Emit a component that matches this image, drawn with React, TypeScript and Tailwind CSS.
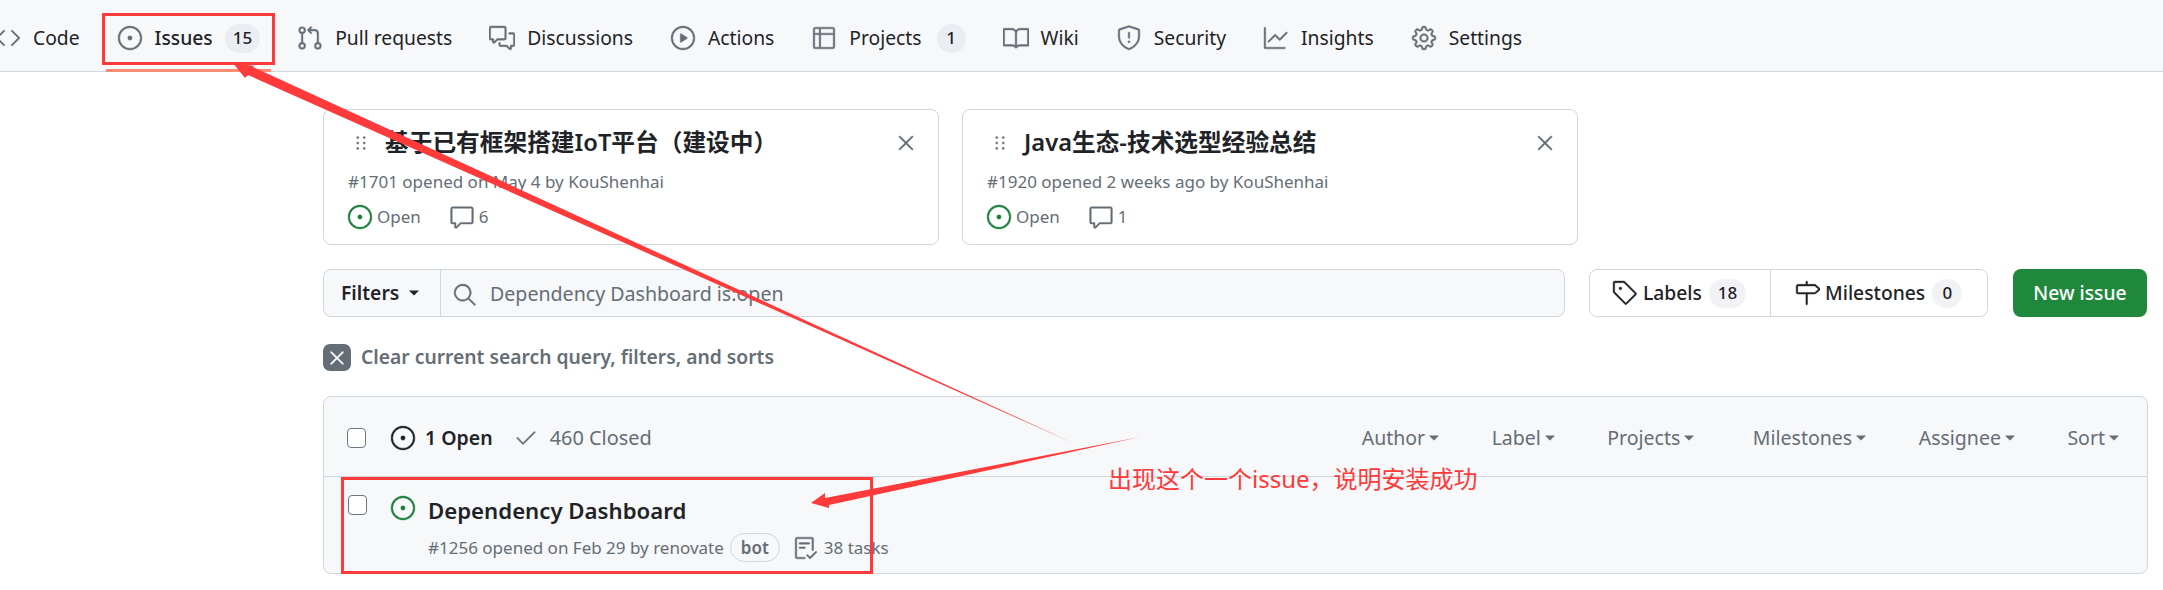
import type { ComponentType, ReactNode } from "react";
import {
  GoBook,
  GoCheck,
  GoChecklist,
  GoCode,
  GoComment,
  GoCommentDiscussion,
  GoGear,
  GoGitPullRequest,
  GoGraph,
  GoGrabber,
  GoIssueOpened,
  GoMilestone,
  GoPlay,
  GoSearch,
  GoShield,
  GoTable,
  GoTag,
  GoTriangleDown,
  GoX,
} from "react-icons/go";

const tabs: { label: string; icon: ComponentType<any>; count?: string; active?: boolean }[] = [
  { label: "Code", icon: GoCode },
  { label: "Issues", icon: GoIssueOpened, count: "15", active: true },
  { label: "Pull requests", icon: GoGitPullRequest },
  { label: "Discussions", icon: GoCommentDiscussion },
  { label: "Actions", icon: GoPlay },
  { label: "Projects", icon: GoTable, count: "1" },
  { label: "Wiki", icon: GoBook },
  { label: "Security", icon: GoShield },
  { label: "Insights", icon: GoGraph },
  { label: "Settings", icon: GoGear },
];

const pinned = [
  { title: "基于已有框架搭建IoT平台（建设中）", meta: "#1701 opened on May 4 by KouShenhai", comments: "6" },
  { title: "Java生态-技术选型经验总结", meta: "#1920 opened 2 weeks ago by KouShenhai", comments: "1" },
];

const listFilters = ["Author", "Label", "Projects", "Milestones", "Assignee", "Sort"];

// octicons come in the 24px variant, so bump the weight to look like the scaled 16px ones
const heavy = { strokeWidth: 0.4 };

function Counter({ children, className }: { children: ReactNode; className: string }) {
  return (
    <span className={`flex items-center justify-center rounded-full text-[17px] font-medium text-[#1f2328] ${className}`}>
      {children}
    </span>
  );
}

function Checkbox() {
  return <span className="block h-[20px] w-[19px] shrink-0 rounded-[4px] border-[1.5px] border-[#6e7781] bg-white" />;
}

function PinnedCard({ title, meta, comments }: { title: string; meta: string; comments: string }) {
  return (
    <div className="h-[136px] w-[616px] rounded-[8px] border border-[#d0d7de] px-[24px] pt-[15px]">
      <div className="flex h-[36px] items-center">
        <GoGrabber className="shrink-0 text-[#656d76]" size={26} {...heavy} />
        <span className="ml-[11px] text-[23.7px] font-semibold text-[#1f2328]">{title}</span>
        <GoX className="ml-auto mr-[-5px] shrink-0 text-[#656d76]" size={26} {...heavy} />
      </div>
      <div className="mt-[9px] text-[17px] leading-[24px] text-[#656d76]">{meta}</div>
      <div className="mt-[10px] flex items-center text-[17px] leading-[24px] text-[#656d76]">
        <GoIssueOpened className="-ml-px text-[#1a7f37]" size={26} {...heavy} />
        <span className="ml-[4px]">Open</span>
        <GoComment className="ml-[28px]" size={26} {...heavy} />
        <span className="ml-[4px]">{comments}</span>
      </div>
    </div>
  );
}

export default function App() {
  return (
    <div className="relative h-[590px] w-[2163px] overflow-hidden bg-white font-['Noto_Sans','Noto_Sans_CJK_SC',sans-serif]">
      {/* Repo nav */}
      <nav className="flex h-[72px] items-center border-b border-[#d0d7de] bg-[#f6f8fa]">
        <div className="-ml-[16px] flex h-full items-center gap-[15px]">
          {tabs.map(({ label, icon: Icon, count, active }) => (
            <a key={label} className="relative flex h-full items-center gap-[12px] px-[11px] pt-[5px] text-[19.3px] text-[#1f2328]">
              <Icon className="shrink-0 text-[#656d76]" size={26} {...heavy} />
              <span className={active ? "font-medium" : ""}>{label}</span>
              {count && (
                <Counter className={`h-[29px] min-w-[29px] bg-[#eaeef2] px-[8px] ${label === "Projects" ? "ml-[3px]" : ""}`}>
                  {count}
                </Counter>
              )}
              {active && <span className="absolute inset-x-0 bottom-[-1px] h-[3px] bg-[#fd8c73]" />}
            </a>
          ))}
        </div>
      </nav>

      <main className="pl-[323px] pr-[15px]">
        {/* Pinned issues */}
        <div className="mt-[37px] flex gap-[23px]">
          {pinned.map((card) => (
            <PinnedCard key={card.title} {...card} />
          ))}
        </div>

        {/* Search + actions */}
        <div className="mt-[24px] flex h-[48px] text-[19.3px]">
          <div className="flex w-[1242px] rounded-[8px] border border-[#d0d7de] bg-[#f6f8fa] pt-[2px]">
            <div className="-mt-[2px] flex w-[117px] items-center gap-[6px] border-r border-[#d0d7de] pl-[17px] font-semibold text-[#1f2328]">
              Filters
              <GoTriangleDown className="text-[#1f2328]" size={18} />
            </div>
            <div className="flex items-center gap-[13px] pl-[11px] text-[19.6px] text-[#656d76]">
              <GoSearch size={25} {...heavy} />
              <span>Dependency Dashboard is:open</span>
            </div>
          </div>
          <div className="ml-[24px] flex w-[399px] rounded-[8px] border border-[#d0d7de] font-medium text-[#1f2328]">
            <div className="flex w-[181px] items-center border-r border-[#d0d7de] pl-[22px]">
              <GoTag size={26} {...heavy} />
              <span className="ml-[5px]">Labels</span>
              <Counter className="ml-[7px] h-[29px] w-[37px] bg-[#f0f2f4]">18</Counter>
            </div>
            <div className="flex flex-1 items-center pl-[23px]">
              <GoMilestone size={26} {...heavy} />
              <span className="ml-[5px]">Milestones</span>
              <Counter className="ml-[7px] h-[29px] w-[30px] bg-[#f0f2f4]">0</Counter>
            </div>
          </div>
          <button className="ml-[25px] w-[134px] rounded-[8px] bg-[#1f883d] font-medium text-white">New issue</button>
        </div>

        {/* Clear filters */}
        <div className="mt-[27px] flex h-[27px] items-center gap-[10px] text-[19.3px] font-semibold text-[#656d76]">
          <span className="flex h-[27px] w-[28px] items-center justify-center rounded-[7px] bg-[#656d76] text-white">
            <GoX size={24} {...heavy} />
          </span>
          Clear current search query, filters, and sorts
        </div>

        {/* Issue list */}
        <div className="mt-[25px] h-[178px] rounded-[8px] border border-[#d0d7de] bg-[#f6f8fa]">
          <div className="flex h-[80px] items-center border-b border-[#d0d7de] pl-[23px] pr-[24px] pt-[2px] text-[19.5px]">
            <Checkbox />
            <GoIssueOpened className="ml-[24px] text-[#1f2328]" size={26} {...heavy} />
            <span className="ml-[9px] font-semibold text-[#1f2328]">1 Open</span>
            <GoCheck className="ml-[21px] text-[#656d76]" size={24} {...heavy} />
            <span className="ml-[12px] text-[19.9px] text-[#656d76]">460 Closed</span>
            <div className="ml-auto flex items-center gap-[48.5px] text-[#656d76]">
              {listFilters.map((name) => (
                <span key={name} className={`flex items-center ${name === "Milestones" ? "ml-[6px]" : ""}`}>
                  {name}
                  <GoTriangleDown size={18} />
                </span>
              ))}
            </div>
          </div>
          <div className="flex pl-[24px] pt-[18px]">
            <Checkbox />
            <GoIssueOpened className="ml-[23px] text-[#1a7f37]" size={26} {...heavy} />
            <div className="ml-[12px]">
              <div className="text-[22.2px] font-semibold leading-[32px] text-[#1f2328]">Dependency Dashboard</div>
              <div className="mt-[6px] flex items-center text-[17px] text-[#656d76]">
                #1256 opened on Feb 29 by renovate
                <span className="ml-[6px] flex h-[29px] w-[50px] items-center justify-center rounded-full border border-[#d0d7de] font-semibold">
                  bot
                </span>
                <GoChecklist className="ml-[13px]" size={26} {...heavy} />
                <span className="ml-[5px]">38 tasks</span>
              </div>
            </div>
          </div>
        </div>
      </main>

      {/* Annotations drawn on top of the screenshot */}
      <div className="absolute left-[102px] top-[13px] h-[52px] w-[173px] border-[3px] border-[#ff3a3a]" />
      <div className="absolute left-[341px] top-[477px] h-[97px] w-[532px] border-[3px] border-[#ff3a3a]" />
      <svg className="pointer-events-none absolute inset-0" width="2163" height="590" viewBox="0 0 2163 590">
        <polygon points="233,63 254,66 253,67 1073,443 248,75 245,78" fill="#ff3a3a" />
        <polygon points="811,503 825,493 825,498 1140,437 829,505 829,508" fill="#ff3a3a" />
      </svg>
      <span className="absolute left-[1108px] top-[462px] text-[24px] leading-[34px] text-[#ff3a3a]">
        出现这个一个issue，说明安装成功
      </span>
    </div>
  );
}
